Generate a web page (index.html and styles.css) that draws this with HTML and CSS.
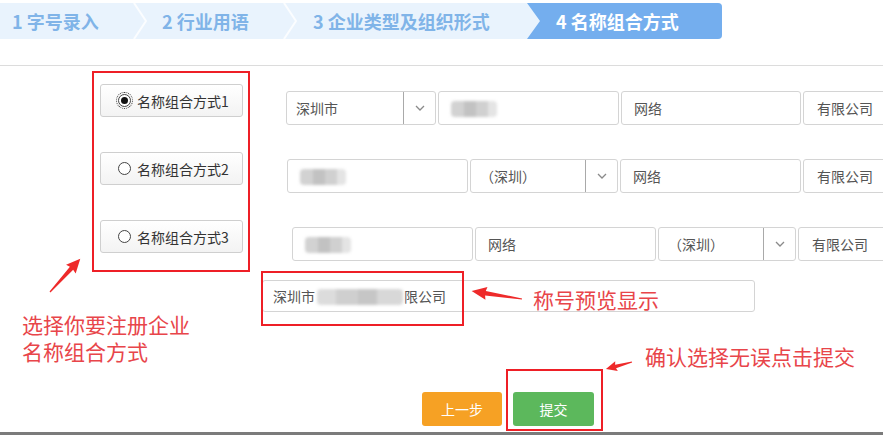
FILE: index.html
```html
<!DOCTYPE html>
<html lang="zh-CN">
<head>
<meta charset="utf-8">
<title>名称组合方式</title>
<link rel="stylesheet" href="styles.css">
</head>
<body>
<div class="page">
  <nav class="steps">
    <div class="step step-1">1 字号录入</div>
    <svg class="sep" viewBox="0 0 14 36"><polyline points="1,0 13,18 1,36" /></svg>
    <div class="step step-2">2 行业用语</div>
    <svg class="sep" viewBox="0 0 14 36"><polyline points="1,0 13,18 1,36" /></svg>
    <div class="step step-3">3 企业类型及组织形式</div>
    <div class="step step-4">4 名称组合方式</div>
  </nav>
  <div class="divider"></div>

  <main class="form">
    <div class="choices">
      <label class="choice"><span class="radio radio-checked"></span>名称组合方式1</label>
      <label class="choice"><span class="radio"></span>名称组合方式2</label>
      <label class="choice"><span class="radio"></span>名称组合方式3</label>
    </div>
    <div class="rows">
      <div class="row">
        <div class="select w150"><span class="select-text">深圳市</span><span class="select-btn"><svg viewBox="0 0 10 6"><polyline points="1,1 5,5 9,1"/></svg></span></div>
        <div class="field w181"><span class="blur"></span></div>
        <div class="field w180">网络</div>
        <div class="field last">有限公司</div>
      </div>
      <div class="row row-2">
        <div class="field w181"><span class="blur"></span></div>
        <div class="select w148"><span class="select-text">（深圳）</span><span class="select-btn"><svg viewBox="0 0 10 6"><polyline points="1,1 5,5 9,1"/></svg></span></div>
        <div class="field w181">网络</div>
        <div class="field last">有限公司</div>
      </div>
      <div class="row row-3">
        <div class="field w181"><span class="blur"></span></div>
        <div class="field w181">网络</div>
        <div class="select w138"><span class="select-text">（深圳）</span><span class="select-btn"><svg viewBox="0 0 10 6"><polyline points="1,1 5,5 9,1"/></svg></span></div>
        <div class="field last">有限公司</div>
      </div>
    </div>
  </main>

  <div class="preview">深圳市<span class="blur blur-wide"></span>限公司</div>

  <div class="actions">
    <button class="btn btn-prev">上一步</button>
    <button class="btn btn-submit">提交</button>
  </div>
  <div class="footer-bar"></div>

  <div class="mark mark-choices"></div>
  <div class="mark mark-preview"></div>
  <div class="mark mark-submit"></div>

  <svg class="arrows" viewBox="0 0 883 435">
    <g transform="translate(50 292) rotate(-47.7)"><polygon points="0,-0.6 32,-2.2 31,-6.5 45,0 31,6.5 32,2.2 0,0.6"/></g>
    <g transform="translate(522 299) rotate(189)"><polygon points="0,-0.6 37,-2.2 36,-6.5 51,0 36,6.5 37,2.2 0,0.6"/></g>
    <g transform="translate(632 362) rotate(165)"><polygon points="0,-0.6 17,-1.8 16,-5 27,0 16,5 17,1.8 0,0.6"/></g>
  </svg>

  <p class="note note-choices-1">选择你要注册企业</p>
  <p class="note note-choices-2">名称组合方式</p>
  <p class="note note-preview">称号预览显示</p>
  <p class="note note-submit">确认选择无误点击提交</p>
</div>
</body>
</html>
```

FILE: styles.css
```css
* { box-sizing: border-box; }

body {
  margin: 0;
  background: #fff;
  font-family: "Noto Sans CJK SC", "Noto Sans", sans-serif;
  overflow: hidden;
}

.page {
  position: relative;
  width: 883px;
  height: 435px;
  overflow: hidden;
}

/* ---- step bar ---- */
.steps {
  display: flex;
  margin-top: 3px;
  width: 722px;
  height: 36px;
  background: #e9f3fd;
  border-radius: 0 4px 4px 0;
}
.step {
  flex: none;
  font-size: 18px;
  font-weight: 700;
  line-height: 36px;
  color: #80b4e8;
  white-space: nowrap;
}
.step-1 { width: 133px; padding-left: 12px; }
.step-2 { width: 136px; padding-left: 15px; }
.step-3 { width: 230px; padding-left: 16px; }
.step-4 {
  flex: 1;
  padding-left: 29px;
  background: #74aeee;
  color: #fff;
  border-radius: 0 4px 4px 0;
  clip-path: polygon(0 0, 100% 0, 100% 100%, 0 100%, 13px 50%);
}
.sep {
  flex: none;
  width: 14px;
  height: 36px;
}
.sep polyline {
  fill: none;
  stroke: #fbfdff;
  stroke-width: 2;
}

.divider {
  margin-top: 26px;
  height: 1px;
  background: #dcdcdc;
}

/* ---- form ---- */
.form {
  display: flex;
  align-items: flex-start;
}
.choices {
  flex: none;
  display: flex;
  flex-direction: column;
  gap: 35px;
  width: 143px;
  margin: 18px 0 0 100px;
}
.choice {
  display: flex;
  align-items: center;
  height: 33px;
  padding-left: 17px;
  border: 1px solid #cfcfcf;
  border-radius: 3px;
  background: linear-gradient(#ffffff, #f3f3f3);
  font-size: 14px;
  color: #333;
  white-space: nowrap;
}
.radio {
  position: relative;
  flex: none;
  width: 13px;
  height: 13px;
  margin-right: 6px;
  border: 1px solid #444;
  border-radius: 50%;
  background: #fff;
}
.radio-checked::after {
  content: "";
  position: absolute;
  left: 2px;
  top: 2px;
  width: 7px;
  height: 7px;
  border-radius: 50%;
  background: #111;
}
.radio-checked {
  outline: 1px dotted #333;
  outline-offset: 1px;
}

.rows {
  flex: none;
  display: flex;
  flex-direction: column;
  gap: 34px;
  margin: 25px 0 0 43px;
}
.row {
  display: flex;
  gap: 2px;
  height: 34px;
}
.row-2 { margin-left: 1px; }
.row-3 { margin-left: 6px; }

.field,
.select {
  flex: none;
  height: 34px;
  border: 1px solid #d4d4d4;
  border-radius: 3px;
  background: #fff;
  font-size: 14px;
  line-height: 32px;
  color: #555;
  white-space: nowrap;
}
.field { padding-left: 12px; }
.field.last { width: 120px; padding-left: 13px; }
.w181 { width: 181px; }
.w180 { width: 180px; }
.w150 { width: 150px; }
.w148 { width: 148px; }
.w138 { width: 138px; }

.select {
  display: flex;
}
.select-text {
  flex: 1;
  padding-left: 9px;
}
.select-btn {
  flex: none;
  width: 32px;
  display: flex;
  align-items: center;
  justify-content: center;
  border-left: 1px solid #a9a9a9;
}
.select-btn svg {
  width: 10px;
  height: 6px;
}
.select-btn polyline {
  fill: none;
  stroke: #8a8a8a;
  stroke-width: 1.3;
}

.blur {
  display: inline-block;
  vertical-align: middle;
  width: 46px;
  height: 16px;
  margin-top: -3px;
  border-radius: 4px;
  background: linear-gradient(90deg, #d2d2d2 0 28%, #c2c2c2 28% 55%, #d0d0d0 55% 80%, #e4e4e4 80%);
  filter: blur(1.5px);
}
.blur-wide {
  width: 86px;
  margin: -3px 1px 0 2px;
  background: linear-gradient(90deg, #dcdcdc 0 22%, #cfcfcf 22% 48%, #c6c6c6 48% 70%, #d8d8d8 70%);
}

/* ---- preview ---- */
.preview {
  width: 493px;
  height: 32px;
  margin: 19px 0 0 262px;
  padding-left: 10px;
  border: 1px solid #d4d4d4;
  border-radius: 3px;
  font-size: 14px;
  line-height: 30px;
  color: #555;
  white-space: nowrap;
}

/* ---- actions ---- */
.actions {
  display: flex;
  gap: 11px;
  margin: 80px 0 0 422px;
}
.btn {
  height: 34px;
  border: none;
  border-radius: 3px;
  font-family: inherit;
  font-size: 14px;
  color: #fff;
}
.btn-prev { width: 80px; background: #f6a124; }
.btn-submit { width: 81px; background: #5cb85c; }

.footer-bar {
  margin-top: 6px;
  height: 10px;
  background: #7b7b7b;
}

/* ---- annotation overlays ---- */
.mark {
  position: absolute;
  border: 2px solid #ee1f26;
}
.mark-choices { left: 92px; top: 71px; width: 158px; height: 201px; }
.mark-preview { left: 261px; top: 271px; width: 203px; height: 55px; }
.mark-submit { left: 506px; top: 369px; width: 97px; height: 62px; }

.arrows {
  position: absolute;
  left: 0;
  top: 0;
  width: 883px;
  height: 435px;
  pointer-events: none;
}
.arrows polygon { fill: #ee2a2a; }

.note {
  position: absolute;
  margin: 0;
  font-size: 21px;
  line-height: 1;
  color: #e8454a;
  white-space: nowrap;
}
.note-choices-1 { left: 22px; top: 314px; }
.note-choices-2 { left: 22px; top: 341px; }
.note-preview { left: 533px; top: 289px; }
.note-submit { left: 645px; top: 346px; }
```
